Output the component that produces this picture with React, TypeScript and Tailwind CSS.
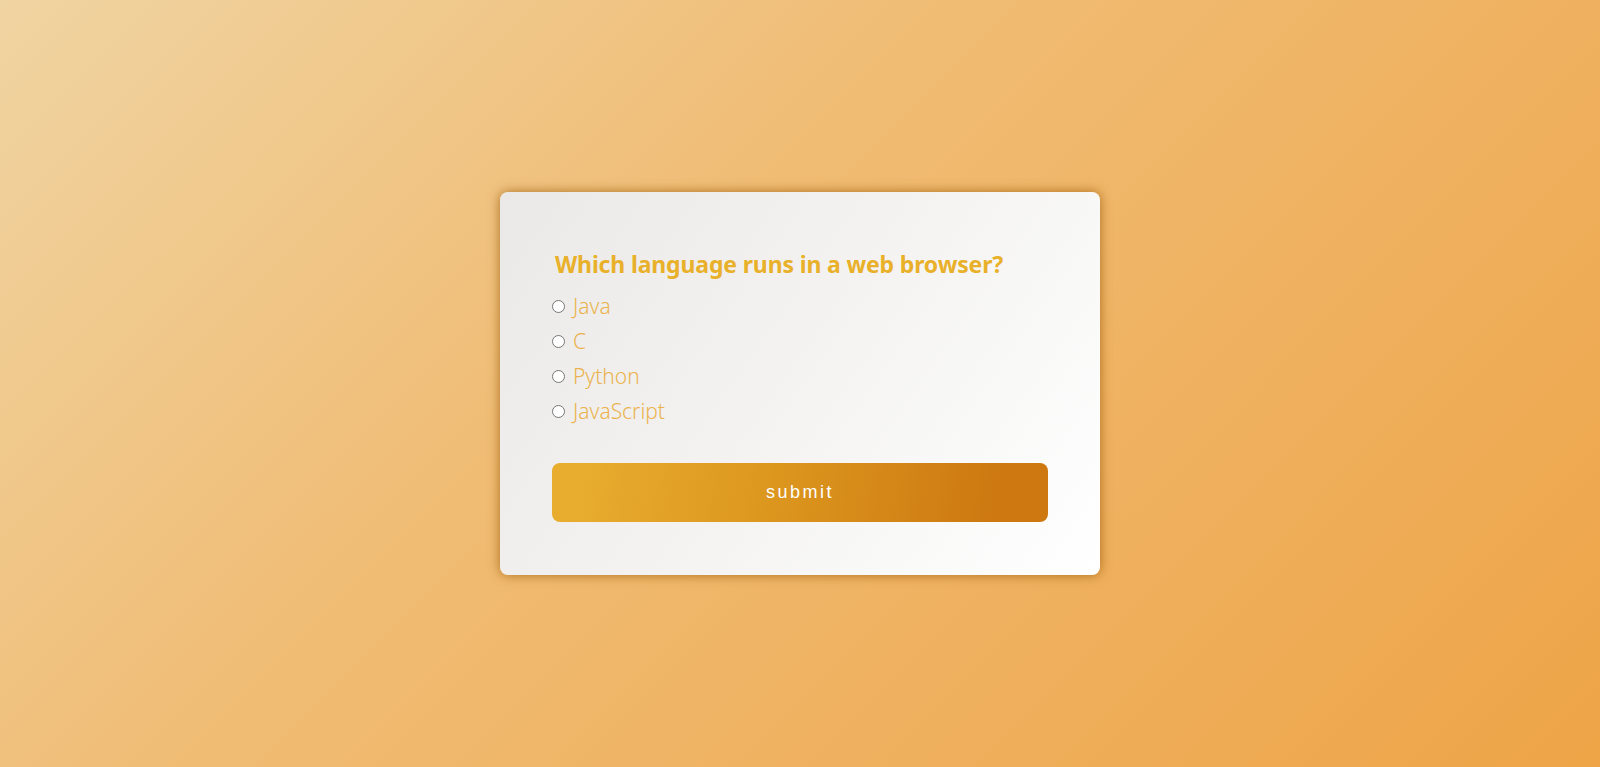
import React from "react";

export default function App() {
  const options = ["Java", "C", "Python", "JavaScript"];
  return (
    <div className="w-full h-[767px] flex items-start justify-center pt-[192px] bg-[linear-gradient(135deg,#f0d4a2_0%,#f0bc74_40%,#eea447_100%)]">
      <div className="w-[600px] h-[383px] rounded-[8px] bg-[linear-gradient(125deg,#eae9e7_0%,#f3f2f1_45%,#ffffff_100%)] shadow-[0_0_12px_rgba(150,85,0,0.75)] px-[52px] pt-[52px] flex flex-col">
        <h2 className="mt-[4px] pl-[3px] text-[23px] leading-[32px] font-bold text-[#e9b02a] font-['Noto_Sans',sans-serif] tracking-[-0.15px]">
          Which language runs in a web browser?
        </h2>
        <ul className="mt-[9px] flex flex-col">
          {options.map((o) => (
            <li key={o} className="h-[35px] flex items-center">
              <input
                type="radio"
                name="q"
                className="m-0 w-[13px] h-[13px] appearance-none rounded-full border border-[#767676] bg-white"
              />
              <label className="ml-[8px] text-[21px] font-light text-[#ebb34f] font-['Noto_Sans',sans-serif]">
                {o}
              </label>
            </li>
          ))}
        </ul>
        <button className="mt-[34px] h-[59px] w-full rounded-[8px] bg-[linear-gradient(100deg,#e8ad2f_5%,#dc961e_45%,#cd7811_90%)] text-white text-[18px] tracking-[2.5px] font-['Liberation_Sans',Arial,sans-serif]">
          submit
        </button>
      </div>
    </div>
  );
}
